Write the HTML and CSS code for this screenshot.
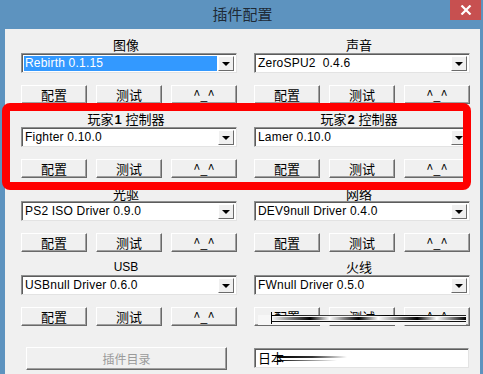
FILE: index.html
```html
<!DOCTYPE html>
<html>
<head>
<meta charset="utf-8">
<link rel="stylesheet" href="styles.css">
</head>
<body>
<div class="window">
  <div class="titlebar">
    <span class="title">插件配置</span>
    <div class="close"><svg width="12" height="10" viewBox="0 0 12 10"><path d="M1.5 0.5 L10.5 9.5 M10.5 0.5 L1.5 9.5" stroke="#fff" stroke-width="2.2" fill="none"/></svg></div>
  </div>
  <div class="client">
    <div class="grid">
      <div class="group">
        <div class="label">图像</div>
        <div class="combo"><span class="value selected">Rebirth 0.1.15</span><span class="arrow"></span></div>
        <div class="buttons"><button class="btn">配置</button><button class="btn">测试</button><button class="btn">^_^</button></div>
      </div>
      <div class="group">
        <div class="label">声音</div>
        <div class="combo"><span class="value">ZeroSPU2&nbsp; 0.4.6</span><span class="arrow"></span></div>
        <div class="buttons"><button class="btn">配置</button><button class="btn">测试</button><button class="btn">^_^</button></div>
      </div>
      <div class="group">
        <div class="label">玩家<b class="num">1</b> 控制器</div>
        <div class="combo"><span class="value">Fighter 0.10.0</span><span class="arrow"></span></div>
        <div class="buttons"><button class="btn">配置</button><button class="btn">测试</button><button class="btn">^_^</button></div>
      </div>
      <div class="group">
        <div class="label">玩家<b class="num">2</b> 控制器</div>
        <div class="combo"><span class="value">Lamer 0.10.0</span><span class="arrow"></span></div>
        <div class="buttons"><button class="btn">配置</button><button class="btn">测试</button><button class="btn">^_^</button></div>
      </div>
      <div class="group">
        <div class="label low">光驱</div>
        <div class="combo"><span class="value">PS2 ISO Driver 0.9.0</span><span class="arrow"></span></div>
        <div class="buttons"><button class="btn">配置</button><button class="btn">测试</button><button class="btn">^_^</button></div>
      </div>
      <div class="group">
        <div class="label low">网络</div>
        <div class="combo"><span class="value">DEV9null Driver 0.4.0</span><span class="arrow"></span></div>
        <div class="buttons"><button class="btn">配置</button><button class="btn">测试</button><button class="btn">^_^</button></div>
      </div>
      <div class="group">
        <div class="label latin">USB</div>
        <div class="combo"><span class="value">USBnull Driver 0.6.0</span><span class="arrow"></span></div>
        <div class="buttons"><button class="btn">配置</button><button class="btn">测试</button><button class="btn">^_^</button></div>
      </div>
      <div class="group">
        <div class="label">火线</div>
        <div class="combo"><span class="value">FWnull Driver 0.5.0</span><span class="arrow"></span></div>
        <div class="buttons glitchy"><button class="btn">配置</button><button class="btn">测试</button><button class="btn">^_^</button>
          <div class="glitch">
            <i class="streak s1"></i><i class="streak s2"></i><i class="streak s3"></i><i class="streak s4"></i>
          </div>
        </div>
      </div>
    </div>
    <div class="bottom">
      <div class="bottom-left"><button class="btn big" disabled>插件目录</button></div>
      <div class="textbox"><span class="tb-text">日本</span><i class="tstreak t1"></i><i class="tstreak t2"></i></div>
    </div>
  </div>
  <div class="highlight"></div>
</div>
</body>
</html>
```
FILE: styles.css
```css
* { box-sizing: border-box; }
html, body { margin: 0; padding: 0; }
body {
  width: 483px;
  height: 374px;
  overflow: hidden;
  background: #5d93bf;
  font-family: "Noto Sans CJK SC", "Liberation Sans", sans-serif;
}
.window { position: relative; width: 483px; height: 374px; }
.titlebar {
  height: 29px;
  display: flex;
  align-items: center;
  justify-content: center;
  position: relative;
}
.title {
  font-size: 15px;
  color: #1e2a36;
  margin-top: -2px;
  margin-left: 2px;
}
.close {
  position: absolute;
  right: 2px;
  top: 0;
  width: 31px;
  height: 20px;
  background: #c75050;
  display: flex;
  align-items: center;
  justify-content: center;
}
.client {
  margin-left: 5px;
  width: 475px;
  height: 345px;
  background: #f0f0f0;
  padding: 8px 0 0 16px;
}
.grid {
  display: grid;
  grid-template-columns: 216px 216px;
  column-gap: 17px;
}
.group { height: 74px; }
.label {
  height: 16px;
  line-height: 16px;
  font-size: 13px;
  text-align: center;
  color: #000;
  padding-right: 6px;
}
.label.low { line-height: 18px; }
.label .num { font-family: "Liberation Sans", sans-serif; font-size: 13px; margin: 0 1px; }
.label.latin { font-family: "Liberation Sans", sans-serif; font-size: 12px; }
.combo {
  height: 20px;
  background: #fff;
  border: 1px solid;
  border-color: #8e8f8f #e3e3e3 #e3e3e3 #8e8f8f;
  box-shadow: inset 1px 1px 0 #5c5c5c;
  display: flex;
  align-items: stretch;
  padding: 2px 2px 1px 2px;
}
.value {
  flex: 1;
  font-family: "Liberation Sans", sans-serif;
  font-size: 12px;
  line-height: 15px;
  padding-left: 1px;
  color: #000;
  white-space: nowrap;
  letter-spacing: 0.2px;
}
.value.selected { background: #3399ff; color: #fff; margin-right: 1px; }
.arrow {
  width: 16px;
  background: #f0f0f0;
  border: 1px solid;
  border-color: #fff #6b6b6b #6b6b6b #fff;
  position: relative;
}
.arrow::after {
  content: "";
  position: absolute;
  left: 3px;
  top: 5px;
  border-left: 4px solid transparent;
  border-right: 4px solid transparent;
  border-top: 4px solid #000;
}
.buttons {
  margin-top: 12px;
  display: flex;
  justify-content: space-between;
  position: relative;
}
.btn {
  width: 66px;
  height: 19px;
  padding: 0;
  font-family: "Noto Sans CJK SC", sans-serif;
  font-size: 13px;
  line-height: 15px;
  color: #000;
  background: #f0f0f0;
  border: 1px solid;
  border-color: #fff #696969 #696969 #fff;
  box-shadow: inset -1px -1px 0 #a0a0a0;
}
.btn.big {
  width: 201px;
  height: 23px;
  color: #9a9a9a;
  font-size: 12px;
  margin-left: 5px;
}
.glitch {
  position: absolute;
  left: 4px;
  right: 4px;
  top: 8px;
  height: 10px;
  background: #f7f7f7;
}
.streak { position: absolute; display: block; }
.s1 { left: 13px; right: 0; top: 0; height: 1px; background: linear-gradient(90deg, #000 0%, #555 40%, #000 60%, #222 100%); }
.s2 { left: 13px; right: 0; top: 2px; height: 3px; background: linear-gradient(90deg, #fff 0%, #000 20%, #fff 30%, #000 45%, #fff 55%, #000 75%, #fff 85%, #000 100%); }
.s3 { left: 13px; right: 0; top: 6px; height: 1px; background: #111; }
.s4 { left: 13px; width: 1px; top: -3px; height: 12px; background: #000; }
.bottom {
  margin-top: 12px;
  display: grid;
  grid-template-columns: 216px 216px;
  column-gap: 17px;
  align-items: start;
}
.textbox {
  margin-top: 3px;
  height: 20px;
  width: 215px;
  background: #fff;
  border: 1px solid;
  border-color: #8e8f8f #e3e3e3 #e3e3e3 #8e8f8f;
  box-shadow: inset 1px 1px 0 #5c5c5c;
  position: relative;
  padding: 0 3px;
  display: flex;
  align-items: center;
}
.tb-text { font-size: 13px; line-height: 16px; color: #000; }
.tstreak { position: absolute; display: block; }
.t1 { left: 22px; top: 7px; width: 70px; height: 2px; background: linear-gradient(90deg, #000, #333 50%, rgba(255,255,255,0)); }
.t2 { left: 22px; top: 11px; width: 60px; height: 1px; background: linear-gradient(90deg, #000, rgba(255,255,255,0)); }
.highlight {
  position: absolute;
  left: 2px;
  top: 103px;
  width: 469px;
  height: 87px;
  border: 8px solid #ff0000;
  border-radius: 8px;
  pointer-events: none;
}
```
